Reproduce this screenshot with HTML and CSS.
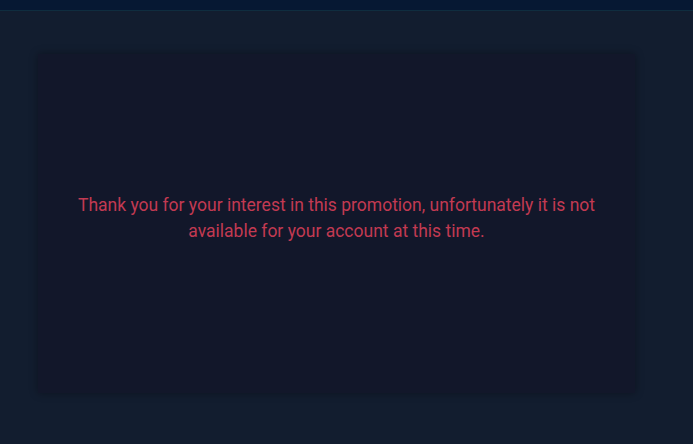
FILE: index.html
```html
<!DOCTYPE html>
<html lang="en">
<head>
<meta charset="utf-8">
<title>Promotion</title>
<link rel="stylesheet" href="styles.css">
</head>
<body>
<header class="topbar"></header>
<main class="page">
  <section class="card">
    <p class="message">Thank you for your interest in this promotion, unfortunately it is not available for your account at this time.</p>
  </section>
</main>
</body>
</html>
```
FILE: styles.css
```css
html, body {
  margin: 0;
  padding: 0;
  background: #121d2f;
  height: 100%;
}
body {
  font-family: Roboto, "Liberation Sans", sans-serif;
}
.topbar {
  height: 10px;
  background: #061833;
  border-bottom: 1px solid #0f2d3f;
}
.page {
  padding: 43px 58px 0 38px;
}
.card {
  height: 339px;
  background: #12172a;
  box-shadow: 0 0 8px rgba(0, 0, 0, 0.35);
  display: flex;
  align-items: center;
  justify-content: center;
  padding: 0 38px;
}
.message {
  margin: 0;
  margin-top: -11px;
  text-align: center;
  color: #c23a52;
  font-size: 17.5px;
  line-height: 26px;
}
```
